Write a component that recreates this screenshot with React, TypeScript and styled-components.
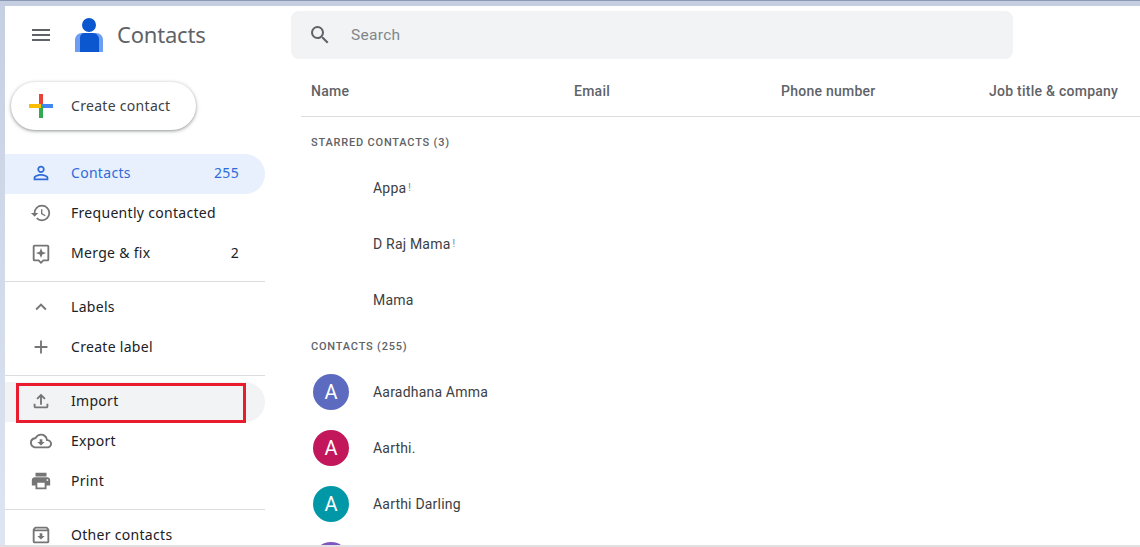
import styled, { createGlobalStyle } from "styled-components";
import {
  MdMenu,
  MdPersonOutline,
  MdHistory,
  MdExpandLess,
  MdAdd,
  MdOutlineFileUpload,
  MdOutlineCloudDownload,
  MdPrint,
  MdOutlineArchive,
  MdSearch,
} from "react-icons/md";

const GlobalStyle = createGlobalStyle`
  html, body {
    margin: 0;
    padding: 0;
    background: #fff;
  }
  * {
    box-sizing: border-box;
  }
`;

const Frame = styled.div`
  width: 1140px;
  height: 547px;
  display: grid;
  grid-template-rows: 6px 1fr 2px;
  overflow: hidden;
  font-family: Roboto, "Liberation Sans", sans-serif;
`;

const TopStrip = styled.div`
  background: #c5cee0;
  border-top: 1px solid #8b9ab2;
`;

const BottomStrip = styled.div`
  background: #e0e0e0;
`;

const Window = styled.div`
  display: grid;
  grid-template-columns: 5px 260px 1fr;
  min-height: 0;
  overflow: hidden;
`;

const LeftStrip = styled.div`
  background: linear-gradient(#c6d0e3, #dfe7f3);
`;

const Sidebar = styled.aside`
  display: flex;
  flex-direction: column;
  min-height: 0;
  position: relative;
`;

const Brand = styled.div`
  height: 58px;
  flex: none;
  padding-left: 24px;
  display: flex;
  align-items: center;
  gap: 22px;
  color: #5f6368;
`;

const BrandName = styled.span`
  font-family: "Noto Sans", sans-serif;
  font-size: 22px;
  line-height: 28px;
  color: #5f6368;
  margin: 0 0 2px -8px;
  letter-spacing: -0.2px;
`;

const CreateButton = styled.button`
  margin: 18px 0 0 6px;
  width: 185px;
  height: 48px;
  flex: none;
  border: 0;
  border-radius: 24px;
  background: #fff;
  box-shadow: 0 1px 3px rgba(60, 64, 67, 0.45), 0 1px 5px rgba(60, 64, 67, 0.18);
  display: flex;
  align-items: center;
  padding: 0 0 0 18px;
  gap: 18px;
  font-family: "Noto Sans", sans-serif;
  font-size: 14px;
  letter-spacing: 0.3px;
  color: #3c4043;
`;

const CreateLabel = styled.span`
  margin-bottom: 2px;
`;

const NavGroup = styled.nav<{ $top?: number }>`
  display: flex;
  flex-direction: column;
  flex: none;
  margin-top: ${(p) => p.$top ?? 0}px;
`;

const NavRow = styled.div<{ $state?: "active" | "hover" }>`
  height: 40px;
  display: flex;
  align-items: center;
  padding: 0 26px 0 24px;
  border-radius: 0 20px 20px 0;
  font-family: "Noto Sans", sans-serif;
  font-size: 14px;
  letter-spacing: 0.3px;
  color: ${(p) => (p.$state === "active" ? "#2f6bd8" : "#202124")};
  background: ${(p) =>
    p.$state === "active" ? "#e8f0fe" : p.$state === "hover" ? "#f1f3f4" : "transparent"};
`;

const NavIcon = styled.span<{ $active?: boolean }>`
  width: 24px;
  height: 24px;
  margin: 0 18px 3px 0;
  display: flex;
  align-items: center;
  justify-content: center;
  font-size: 22px;
  color: ${(p) => (p.$active ? "#2f6bd8" : "#757575")};
`;

const NavLabel = styled.span`
  flex: 1;
  margin-bottom: 4px;
`;

const NavCount = styled.span`
  margin-bottom: 4px;
`;

const Divider = styled.hr<{ $top: number; $bottom: number }>`
  border: 0;
  flex: none;
  height: 1px;
  background: #dadce0;
  margin: ${(p) => p.$top}px 0 ${(p) => p.$bottom}px;
`;

const Annotation = styled.div`
  position: absolute;
  left: 11px;
  top: 377px;
  width: 230px;
  height: 40px;
  border: 3px solid #e81c2c;
`;

const Main = styled.main`
  min-width: 0;
  padding: 5px 0 0 26px;
  display: flex;
  flex-direction: column;
`;

const SearchBar = styled.div`
  width: 722px;
  height: 48px;
  flex: none;
  border-radius: 8px;
  background: #f1f3f4;
  display: flex;
  align-items: center;
  padding-left: 17px;
  gap: 19px;
  font-size: 15.5px;
  letter-spacing: 0.3px;
  color: #80868b;
  svg {
    font-size: 24px;
    color: #5f6368;
  }
`;

const ColumnHeads = styled.div`
  margin: 8px 0 0 10px;
  height: 50px;
  flex: none;
  display: grid;
  grid-template-columns: 263px 207px 208px 1fr;
  align-items: center;
  padding: 0 0 2px 10px;
  border-bottom: 1px solid #dadce0;
  font-size: 14px;
  font-weight: 500;
  letter-spacing: 0.25px;
  color: #5f6368;
  white-space: nowrap;
`;

const SectionHead = styled.div<{ $top?: number }>`
  margin: ${(p) => p.$top ?? 0}px 0 0 20px;
  height: 28px;
  flex: none;
  display: flex;
  align-items: center;
  font-size: 11px;
  font-weight: 500;
  letter-spacing: 0.8px;
  color: #5f6368;
`;

const ContactRow = styled.div`
  height: 56px;
  flex: none;
  display: flex;
  align-items: center;
  margin-left: 22px;
`;

const Avatar = styled.div<{ $color: string }>`
  width: 36px;
  height: 36px;
  border-radius: 50%;
  background: ${(p) => p.$color};
  color: #fff;
  display: flex;
  align-items: center;
  justify-content: center;
  font-size: 20px;
`;

const AvatarSlot = styled.div`
  width: 60px;
  display: flex;
`;

const ContactName = styled.span`
  font-size: 14px;
  color: #3c4043;
  letter-spacing: 0.2px;
  white-space: nowrap;
`;

// the emoji after these names is cut off in the list, only a sliver of it shows
const NameSliver = styled.span`
  font-size: 10px;
  color: #80868b;
  margin-left: 2px;
  vertical-align: 2px;
`;

const StarredList = styled.div`
  margin: 4px 0;
`;

const ContactList = styled.div`
  margin-top: 4px;
`;

const Logo = () => (
  <svg width="28" height="34" viewBox="0 0 28 34">
    <path d="M7 15h14c4 0 7 3 7 7v12H0V22c0-4 3-7 7-7z" fill="#6f9df2" />
    <circle cx="14" cy="7" r="7" fill="#0b57d0" />
    <path d="M10 15h8c3 0 6 3 6 6v13H5V20c0-3 2-5 5-5z" fill="#0b57d0" />
  </svg>
);

const ColorPlus = () => (
  <svg width="24" height="24" viewBox="0 0 24 24">
    <rect x="10" y="0" width="4" height="12" fill="#ea4335" />
    <rect x="12" y="10" width="12" height="4" fill="#4285f4" />
    <rect x="10" y="12" width="4" height="12" fill="#34a853" />
    <rect x="0" y="10" width="12" height="4" fill="#fbbc04" />
  </svg>
);

const MergeIcon = () => (
  <svg width="22" height="22" viewBox="0 0 24 24" fill="currentColor">
    <path d="M5 3h14a2 2 0 0 1 2 2v14a2 2 0 0 1-2 2h-4l-3 3-3-3H5a2 2 0 0 1-2-2V5a2 2 0 0 1 2-2zm0 2v14h4.8l2.2 2.2 2.2-2.2H19V5H5z" />
    <path d="M12 6.5l1.5 4 4 1.5-4 1.5-1.5 4-1.5-4-4-1.5 4-1.5z" />
  </svg>
);

const topNav = [
  { icon: <MdPersonOutline />, label: "Contacts", count: "255", state: "active" as const },
  { icon: <MdHistory />, label: "Frequently contacted" },
  { icon: <MergeIcon />, label: "Merge & fix", count: "2" },
];

const labelNav = [
  { icon: <MdExpandLess />, label: "Labels" },
  { icon: <MdAdd />, label: "Create label" },
];

const toolNav = [
  { icon: <MdOutlineFileUpload />, label: "Import", state: "hover" as const },
  { icon: <MdOutlineCloudDownload />, label: "Export" },
  { icon: <MdPrint />, label: "Print" },
];

const starred = [
  { name: "Appa", sliver: true },
  { name: "D Raj Mama", sliver: true },
  { name: "Mama" },
];

const contacts = [
  { name: "Aaradhana Amma", initial: "A", color: "#5c6bc0" },
  { name: "Aarthi.", initial: "A", color: "#c2185b" },
  { name: "Aarthi Darling", initial: "A", color: "#0097a7" },
  // only the top of this avatar is in view
  { name: "", initial: "", color: "#7e57c2" },
];

type NavItem = {
  icon: React.ReactNode;
  label: string;
  count?: string;
  state?: "active" | "hover";
};

const renderNav = (items: NavItem[]) =>
  items.map((item) => (
    <NavRow key={item.label} $state={item.state}>
      <NavIcon $active={item.state === "active"}>{item.icon}</NavIcon>
      <NavLabel>{item.label}</NavLabel>
      {item.count && <NavCount>{item.count}</NavCount>}
    </NavRow>
  ));

const App = () => {
  return (
    <Frame>
      <GlobalStyle />
      <TopStrip />
      <Window>
        <LeftStrip />
        <Sidebar>
          <Brand>
            <MdMenu size={24} color="#5f6368" />
            <Logo />
            <BrandName>Contacts</BrandName>
          </Brand>
          <CreateButton>
            <ColorPlus />
            <CreateLabel>Create contact</CreateLabel>
          </CreateButton>
          <NavGroup $top={24}>{renderNav(topNav)}</NavGroup>
          <Divider $top={7} $bottom={6} />
          <NavGroup>{renderNav(labelNav)}</NavGroup>
          <Divider $top={7} $bottom={6} />
          <NavGroup>{renderNav(toolNav)}</NavGroup>
          <Divider $top={7} $bottom={6} />
          <NavGroup>
            <NavRow>
              <NavIcon>
                <MdOutlineArchive />
              </NavIcon>
              <NavLabel>Other contacts</NavLabel>
            </NavRow>
          </NavGroup>
          <Annotation />
        </Sidebar>
        <Main>
          <SearchBar>
            <MdSearch />
            Search
          </SearchBar>
          <ColumnHeads>
            <span>Name</span>
            <span>Email</span>
            <span>Phone number</span>
            <span>Job title &amp; company</span>
          </ColumnHeads>
          <SectionHead $top={11}>STARRED CONTACTS (3)</SectionHead>
          <StarredList>
            {starred.map((c) => (
              <ContactRow key={c.name}>
                <AvatarSlot />
                <ContactName>
                  {c.name}
                  {c.sliver && <NameSliver>!</NameSliver>}
                </ContactName>
              </ContactRow>
            ))}
          </StarredList>
          <SectionHead>CONTACTS (255)</SectionHead>
          <ContactList>
            {contacts.map((c) => (
              <ContactRow key={c.color}>
                <AvatarSlot>
                  <Avatar $color={c.color}>{c.initial}</Avatar>
                </AvatarSlot>
                <ContactName>{c.name}</ContactName>
              </ContactRow>
            ))}
          </ContactList>
        </Main>
      </Window>
      <BottomStrip />
    </Frame>
  );
};

export default App;
